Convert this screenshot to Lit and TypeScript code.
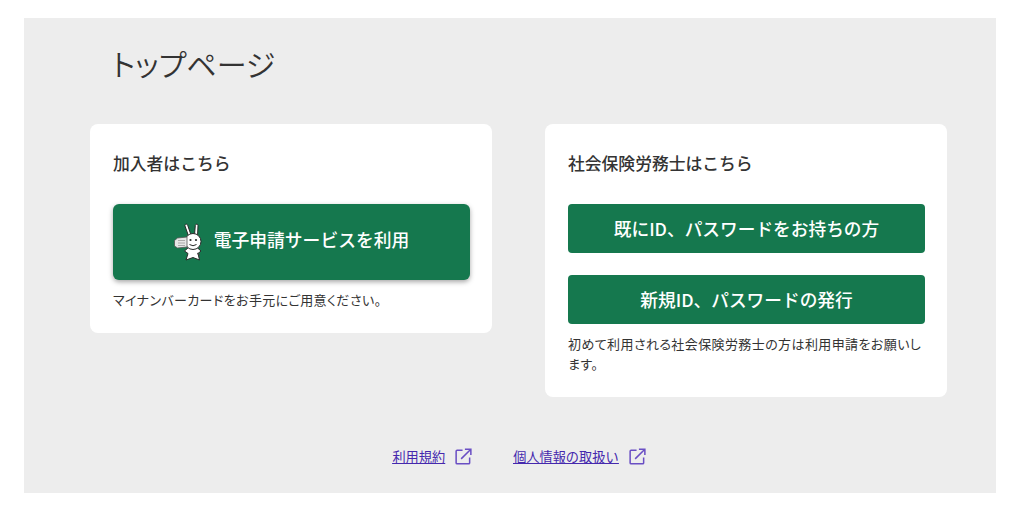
import {LitElement, css, html} from 'lit';
import {customElement} from 'lit/decorators.js';

const externalIcon = html`
  <svg class="ext" viewBox="0 0 18 18" width="17" height="17" fill="none"
      stroke="currentColor" stroke-width="1.600">
    <path d="M8 2.500H2.200a1 1 0 0 0-1 1v12.300a1 1 0 0 0 1 1h12.300a1 1 0 0 0 1-1V10"/>
    <path d="M6.500 11.500 16.500 1.500M10.500 1.200h6.300v6.300"/>
  </svg>`;

// the mascot, small enough that only its outline and ears read
const mascot = html`
  <svg class="mascot" viewBox="0 0 28 38" width="28" height="38">
    <path d="M14.500 13 11 3c-.5-2 2-2.600 2.700-.7L17 12M20.500 12l.8-9.500c.2-1.900 2.800-1.700 2.700.2L23.500 14"
      fill="#fff" stroke="#2a2a2a"/>
    <path d="M15 24 10.500 28l3.500 2.500-2 6.500 7-2.500 6.500 2.500-1.500-6.500 3-2.500-4.500-4z"
      fill="#fff" stroke="#2a2a2a"/>
    <circle cx="19" cy="18.500" r="8" fill="#fff" stroke="#2a2a2a"/>
    <path d="M.5 17.500 3.500 15l9.500-1v10l-9.500 1L.5 23z" fill="#e6e6e6" stroke="#555" stroke-width=".8"/>
    <path d="M4 17.500h7M4 20h7M4 22.500h7" stroke="#999" stroke-width=".8"/>
    <circle cx="16.500" cy="17" r="1.100" fill="#2a2a2a"/>
    <circle cx="22" cy="17" r="1.100" fill="#2a2a2a"/>
    <path d="M15.500 21.500q3.500 2.500 7 0" fill="none" stroke="#2a2a2a"/>
    <path d="M23.500 30l2 2.500" stroke="#444" stroke-width="1.400"/>
  </svg>`;

@customElement('app-root')
export class AppRoot extends LitElement {
  static styles = css`
    :host {
      display: block;
      height: 517px;
      padding: 18px 28px 24px 24px;
      box-sizing: border-box;
      background: #fff;
      font-family: "Noto Sans CJK JP", "Noto Sans", sans-serif;
      color: #333;
    }
    .page {
      height: 475px;
      background: #ededed;
      padding: 24px 49px 0 66px;
      box-sizing: border-box;
    }
    h1 {
      margin: 0 0 0 22px;
      font-size: 30px;
      line-height: 42px;
      font-weight: 350;
      font-feature-settings: "palt";
    }
    .cards {
      display: flex;
      align-items: flex-start;
      justify-content: space-between;
      margin-top: 40px;
    }
    .card {
      width: 402px;
      box-sizing: border-box;
      background: #fff;
      border-radius: 8px;
      padding: 27px 22px 23px 23px;
    }
    h2 {
      margin: 0 0 28px;
      font-size: 16.800px;
      line-height: 25px;
      font-weight: 500;
    }
    .btn {
      display: flex;
      align-items: center;
      justify-content: center;
      gap: 12px;
      box-sizing: border-box;
      padding-bottom: 2px;
      background: #15784e;
      color: #fff;
      border-radius: 4px;
      height: 49px;
      font-size: 17.700px;
      font-weight: 500;
    }
    .btn.big {
      height: 76px;
      padding-bottom: 6px;
      border-radius: 6px;
      font-size: 17.800px;
      box-shadow: 0 2px 5px rgba(0, 0, 0, .35);
    }
    .mascot {
      margin-top: 6px;
    }
    .btn + .btn {
      margin-top: 22px;
    }
    p {
      margin: 10px 0 0;
      font-size: 13px;
      line-height: 20px;
      letter-spacing: .4px;
      font-feature-settings: "palt";
    }
    .big + p {
      margin-top: 10px;
    }
    .links {
      display: flex;
      justify-content: center;
      gap: 41px;
      margin: 50px 0 0 1px;
    }
    a {
      display: flex;
      align-items: center;
      gap: 10px;
      font-size: 13.200px;
    }
    a span {
      text-decoration: underline;
      color: #4528ad;
    }
    .ext {
      color: #6a4fc4;
    }
  `;

  render() {
    return html`
      <div class="page">
        <h1>トップページ</h1>
        <div class="cards">
          <section class="card">
            <h2>加入者はこちら</h2>
            <div class="btn big">${mascot}電子申請サービスを利用</div>
            <p>マイナンバーカードをお手元にご用意ください。</p>
          </section>
          <section class="card">
            <h2>社会保険労務士はこちら</h2>
            <div class="btn">既にID、パスワードをお持ちの方</div>
            <div class="btn">新規ID、パスワードの発行</div>
            <p>初めて利用される社会保険労務士の方は利用申請をお願いします。</p>
          </section>
        </div>
        <div class="links">
          <a href="#"><span>利用規約</span>${externalIcon}</a>
          <a href="#"><span>個人情報の取扱い</span>${externalIcon}</a>
        </div>
      </div>
    `;
  }
}
